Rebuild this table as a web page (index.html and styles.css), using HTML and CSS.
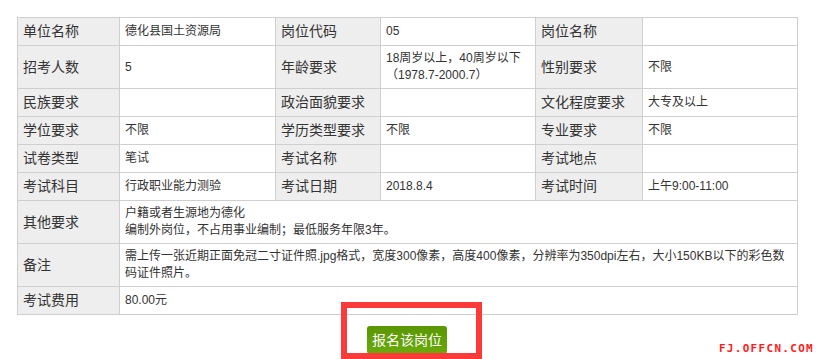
FILE: index.html
```html
<!DOCTYPE html>
<html lang="zh-CN">
<head>
<meta charset="utf-8">
<title>岗位信息</title>
<link rel="stylesheet" href="styles.css">
</head>
<body>
<div class="page">
  <table class="info">
    <colgroup>
      <col class="c-lab1"><col class="c-val1"><col class="c-lab2"><col class="c-val2"><col class="c-lab3"><col class="c-val3">
    </colgroup>
    <tr>
      <th>单位名称</th><td>德化县国土资源局</td>
      <th>岗位代码</th><td>05</td>
      <th>岗位名称</th><td></td>
    </tr>
    <tr>
      <th>招考人数</th><td>5</td>
      <th>年龄要求</th><td>18周岁以上，40周岁以下<br>（1978.7-2000.7）</td>
      <th>性别要求</th><td>不限</td>
    </tr>
    <tr>
      <th>民族要求</th><td></td>
      <th>政治面貌要求</th><td></td>
      <th>文化程度要求</th><td>大专及以上</td>
    </tr>
    <tr>
      <th>学位要求</th><td>不限</td>
      <th>学历类型要求</th><td>不限</td>
      <th>专业要求</th><td>不限</td>
    </tr>
    <tr>
      <th>试卷类型</th><td>笔试</td>
      <th>考试名称</th><td></td>
      <th>考试地点</th><td></td>
    </tr>
    <tr>
      <th>考试科目</th><td>行政职业能力测验</td>
      <th>考试日期</th><td>2018.8.4</td>
      <th>考试时间</th><td>上午9:00-11:00</td>
    </tr>
    <tr>
      <th>其他要求</th><td colspan="5">户籍或者生源地为德化<br>编制外岗位，不占用事业编制；最低服务年限3年。</td>
    </tr>
    <tr>
      <th>备注</th><td colspan="5">需上传一张近期正面免冠二寸证件照.jpg格式，宽度300像素，高度400像素，分辨率为350dpi左右，大小150KB以下的彩色数<br>码证件照片。</td>
    </tr>
    <tr>
      <th>考试费用</th><td colspan="5">80.00元</td>
    </tr>
  </table>
  <div class="actions">
    <a class="btn" href="#">报名该岗位</a>
  </div>
  <div class="mark"></div>
  <div class="watermark">FJ.OFFCN.COM</div>
</div>
</body>
</html>
```
FILE: styles.css
```css
html, body {
  margin: 0;
  padding: 0;
  background: #fff;
}
body {
  font-family: "Liberation Sans", "Noto Sans CJK SC", sans-serif;
  color: #333;
}
.page {
  position: relative;
  width: 820px;
  height: 359px;
  overflow: hidden;
  padding: 17px 0 0 17px;
  box-sizing: border-box;
}
.info {
  width: 780px;
  table-layout: fixed;
  border-collapse: collapse;
}
.c-lab1 { width: 102px; }
.c-val1 { width: 156px; }
.c-lab2 { width: 105px; }
.c-val2 { width: 155px; }
.c-lab3 { width: 107px; }
.c-val3 { width: 155px; }
.info th,
.info td {
  border: 1px solid #cfcfcf;
  padding: 4px 5px;
  vertical-align: middle;
  text-align: left;
}
.info th {
  background: #eeeeee;
  font-weight: normal;
  font-size: 14px;
  line-height: 19px;
  color: #333;
  white-space: nowrap;
}
.info td {
  font-size: 12px;
  line-height: 17px;
  color: #333;
}
.actions {
  margin-top: 11px;
  width: 780px;
  display: flex;
  justify-content: center;
}
.btn {
  display: block;
  width: 80px;
  height: 28px;
  line-height: 28px;
  text-align: center;
  font-size: 14px;
  color: #fff;
  text-decoration: none;
  border-radius: 3px;
  background: linear-gradient(#5a9602, #6aaa0c);
}
.mark {
  position: absolute;
  left: 341px;
  top: 302px;
  width: 129px;
  height: 45px;
  border: 6px solid #fd3a3a;
}
.watermark {
  position: absolute;
  right: 6px;
  top: 343px;
  font-family: "DejaVu Sans Mono", monospace;
  font-weight: bold;
  font-size: 11px;
  line-height: 12px;
  letter-spacing: 1.3px;
  color: #ff1c1c;
}
```
